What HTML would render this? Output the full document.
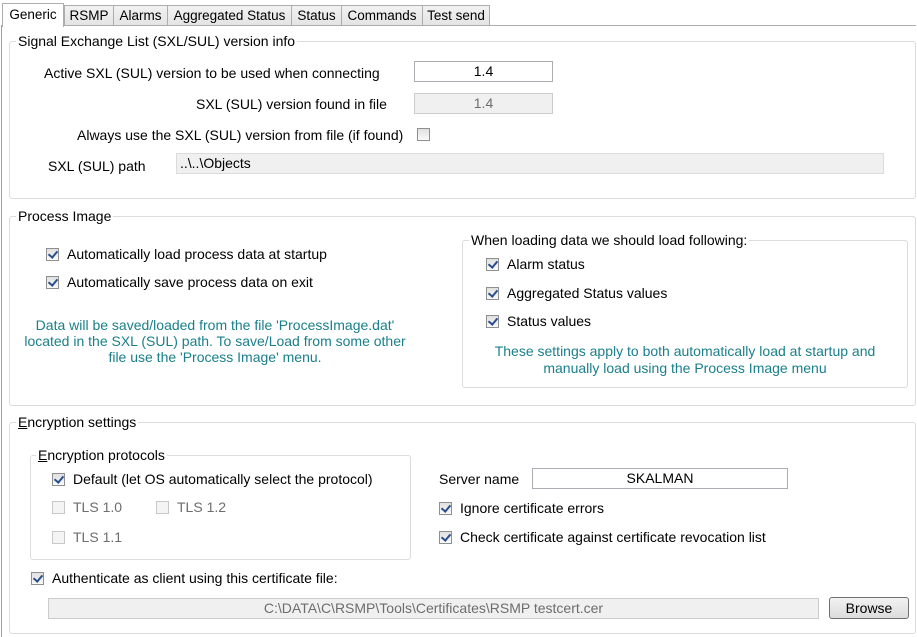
<!DOCTYPE html><html><head><style>
body{margin:0;width:917px;height:637px;background:#fff;font-family:"Liberation Sans",sans-serif;font-size:14px;color:#000;position:relative;overflow:hidden}
.a{position:absolute;white-space:nowrap}
.tab{position:absolute;top:5px;height:20px;border:1px solid #adadad;border-bottom:none;background:linear-gradient(#f2f2f2,#e4e4e4);line-height:20px;text-align:center;box-sizing:border-box;font-size:13.5px}
.g{position:absolute;border:1px solid #dcdcdc;border-radius:3px}
.gt{position:absolute;background:#fff;padding:0 2px;top:-9px;left:6px;white-space:nowrap}
.tb{position:absolute;border:1px solid #abadb3;height:21px;box-sizing:border-box;line-height:19px;padding:0 6px}
.cb{position:absolute;width:13px;height:13px;border:1px solid #8e8f8f;box-sizing:border-box;background:linear-gradient(#e0e0e0,#fafafa)}
.cb.c::after{content:"";position:absolute;left:3px;top:0px;width:4px;height:7px;border:solid #2a4d8c;border-width:0 2px 2px 0;transform:rotate(40deg)}
.cb.d{border-color:#c9c9c9;background:#f4f4f4}
.teal{color:#1a7f8a;text-align:center}
</style></head><body>
<div class="a" style="left:1px;top:25px;width:915px;height:612px;border-left:1px solid #a0a0a0;border-top:1px solid #adadad;box-sizing:border-box"></div>
<div class="tab" style="left:64px;width:50px">RSMP</div>
<div class="tab" style="left:113px;width:55px">Alarms</div>
<div class="tab" style="left:167px;width:125px">Aggregated Status</div>
<div class="tab" style="left:291px;width:51px">Status</div>
<div class="tab" style="left:341px;width:82px">Commands</div>
<div class="tab" style="left:422px;width:68px">Test send</div>
<div class="tab" style="left:2px;top:3px;width:62px;height:24px;background:#fff;line-height:22px">Generic</div>

<div class="g" style="left:9px;top:41px;width:905px;height:156px"><span class="gt">Signal Exchange List (SXL/SUL) version info</span></div>
<div class="a" style="left:44px;top:65px">Active SXL (SUL) version to be used when connecting</div>
<div class="tb" style="left:414px;top:61px;width:139px;text-align:center">1.4</div>
<div class="a" style="left:196px;top:96px">SXL (SUL) version found in file</div>
<div class="tb" style="left:414px;top:93px;width:139px;text-align:center;background:#f0f0f0;border-color:#ccc;color:#6d6d6d">1.4</div>
<div class="a" style="left:77px;top:127px">Always use the SXL (SUL) version from file (if found)</div>
<div class="cb" style="left:417px;top:128px"></div>
<div class="a" style="left:48px;top:158px">SXL (SUL) path</div>
<div class="tb" style="left:176px;top:153px;width:708px;background:#f0f0f0;border-color:#dcdcdc;padding-left:3px">..\..\Objects</div>

<div class="g" style="left:9px;top:216px;width:905px;height:188px"><span class="gt">Process Image</span></div>
<div class="cb c" style="left:46px;top:248px"></div><div class="a" style="left:67px;top:246px">Automatically load process data at startup</div>
<div class="cb c" style="left:46px;top:276px"></div><div class="a" style="left:67px;top:274px">Automatically save process data on exit</div>
<div class="a teal" style="left:10px;top:317px;width:410px;line-height:16px">Data will be saved/loaded from the file 'ProcessImage.dat'<br>located in the SXL (SUL) path. To save/Load from some other<br>file use the 'Process Image' menu.</div>
<div class="g" style="left:462px;top:240px;width:444px;height:146px"><span class="gt" style="left:6px">When loading data we should load following:</span></div>
<div class="cb c" style="left:486px;top:258px"></div><div class="a" style="left:507px;top:256px">Alarm status</div>
<div class="cb c" style="left:486px;top:287px"></div><div class="a" style="left:507px;top:285px">Aggregated Status values</div>
<div class="cb c" style="left:486px;top:315px"></div><div class="a" style="left:507px;top:313px">Status values</div>
<div class="a teal" style="left:463px;top:343px;width:444px;line-height:17px">These settings apply to both automatically load at startup and<br>manually load using the Process Image menu</div>

<div class="g" style="left:9px;top:422px;width:905px;height:210px"><span class="gt"><u>E</u>ncryption settings</span></div>
<div class="g" style="left:30px;top:455px;width:379px;height:103px"><span class="gt" style="left:5px"><u>E</u>ncryption protocols</span></div>
<div class="cb c" style="left:52px;top:473px"></div><div class="a" style="left:73px;top:471px">Default (let OS automatically select the protocol)</div>
<div class="cb d" style="left:52px;top:501px"></div><div class="a" style="left:73px;top:499px;color:#6d6d6d">TLS 1.0</div>
<div class="cb d" style="left:156px;top:501px"></div><div class="a" style="left:177px;top:499px;color:#6d6d6d">TLS 1.2</div>
<div class="cb d" style="left:52px;top:531px"></div><div class="a" style="left:73px;top:529px;color:#6d6d6d">TLS 1.1</div>
<div class="a" style="left:439px;top:471px">Server name</div>
<div class="tb" style="left:532px;top:468px;width:256px;text-align:center">SKALMAN</div>
<div class="cb c" style="left:439px;top:502px"></div><div class="a" style="left:460px;top:500px">Ignore certificate errors</div>
<div class="cb c" style="left:439px;top:531px"></div><div class="a" style="left:460px;top:529px">Check certificate against certificate revocation list</div>
<div class="cb c" style="left:31px;top:572px"></div><div class="a" style="left:52px;top:570px">Authenticate as client using this certificate file:</div>
<div class="tb" style="left:48px;top:598px;width:771px;background:#f0f0f0;border-color:#ccc;color:#6d6d6d;text-align:center">C:\DATA\C\RSMP\Tools\Certificates\RSMP testcert.cer</div>
<div class="a" style="left:829px;top:597px;width:80px;height:22px;border:1px solid #707070;border-radius:3px;background:linear-gradient(#f2f2f2,#dcdcdc);text-align:center;line-height:20px;box-sizing:border-box">Browse</div>
</body></html>
